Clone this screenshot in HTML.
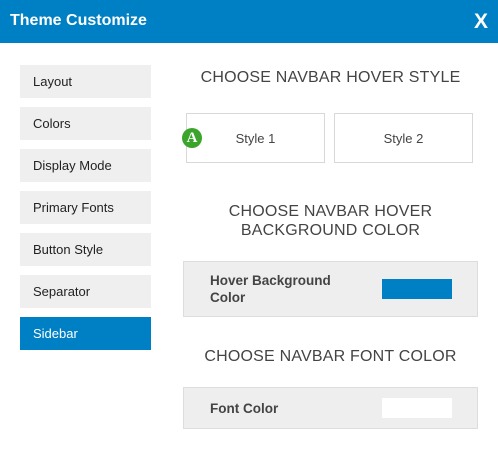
<!DOCTYPE html>
<html><head><style>
*{margin:0;padding:0;box-sizing:border-box}
body{width:498px;height:450px;background:#fff;font-family:"Liberation Sans",sans-serif;position:relative;overflow:hidden;color:#444}
.hd{position:absolute;left:0;top:0;width:498px;height:43px;background:#0080c4;color:#fff}
.hd .t{position:absolute;left:10px;top:12px;font-size:16px;font-weight:bold}
.hd .x{position:absolute;right:10px;top:10px;font-size:21px;font-weight:bold}
.nav{position:absolute;left:20px;width:131px;height:33px;background:#efefef;font-size:13px;color:#222;padding-left:13px;line-height:33px}
.nav.a{background:#0080c4;color:#fff}
.h{position:absolute;font-size:16px;color:#444;text-align:center;letter-spacing:.2px;line-height:19px}
.sb{position:absolute;top:113px;width:139px;height:50px;border:1px solid #d8d8d8;font-size:13px;text-align:center;line-height:50px;color:#444}
.box{position:absolute;left:183px;width:295px;background:#eee;border:1px solid #ddd;font-size:13.5px;font-weight:bold;color:#444}
.sw{position:absolute;left:198px;width:70px;height:20px}
</style></head><body>
<div class="hd"><div class="t">Theme Customize</div><div class="x">X</div></div>
<div class="nav" style="top:65px">Layout</div>
<div class="nav" style="top:107px">Colors</div>
<div class="nav" style="top:149px">Display Mode</div>
<div class="nav" style="top:191px">Primary Fonts</div>
<div class="nav" style="top:233px">Button Style</div>
<div class="nav" style="top:275px">Separator</div>
<div class="nav a" style="top:317px">Sidebar</div>
<div class="h" style="left:183px;width:295px;top:68px">CHOOSE NAVBAR HOVER STYLE</div>
<div class="sb" style="left:186px">Style 1</div>
<div class="sb" style="left:334px">Style 2</div>
<div style="position:absolute;left:182px;top:128px;width:20px;height:20px;border-radius:50%;background:#3aa52a;color:#fff;font-family:'Liberation Serif',serif;font-weight:bold;font-size:15px;text-align:center;line-height:20px">A</div>
<div class="h" style="left:183px;width:295px;top:202px">CHOOSE NAVBAR HOVER<br>BACKGROUND COLOR</div>
<div class="box" style="top:261px;height:56px"><div style="position:absolute;left:26px;top:10px;line-height:17px">Hover Background<br>Color</div><div class="sw" style="top:17px;background:#0080c4"></div></div>
<div class="h" style="left:183px;width:295px;top:347px">CHOOSE NAVBAR FONT COLOR</div>
<div class="box" style="top:387px;height:42px"><div style="position:absolute;left:26px;top:13px">Font Color</div><div class="sw" style="top:10px;background:#fff"></div></div>
</body></html>
